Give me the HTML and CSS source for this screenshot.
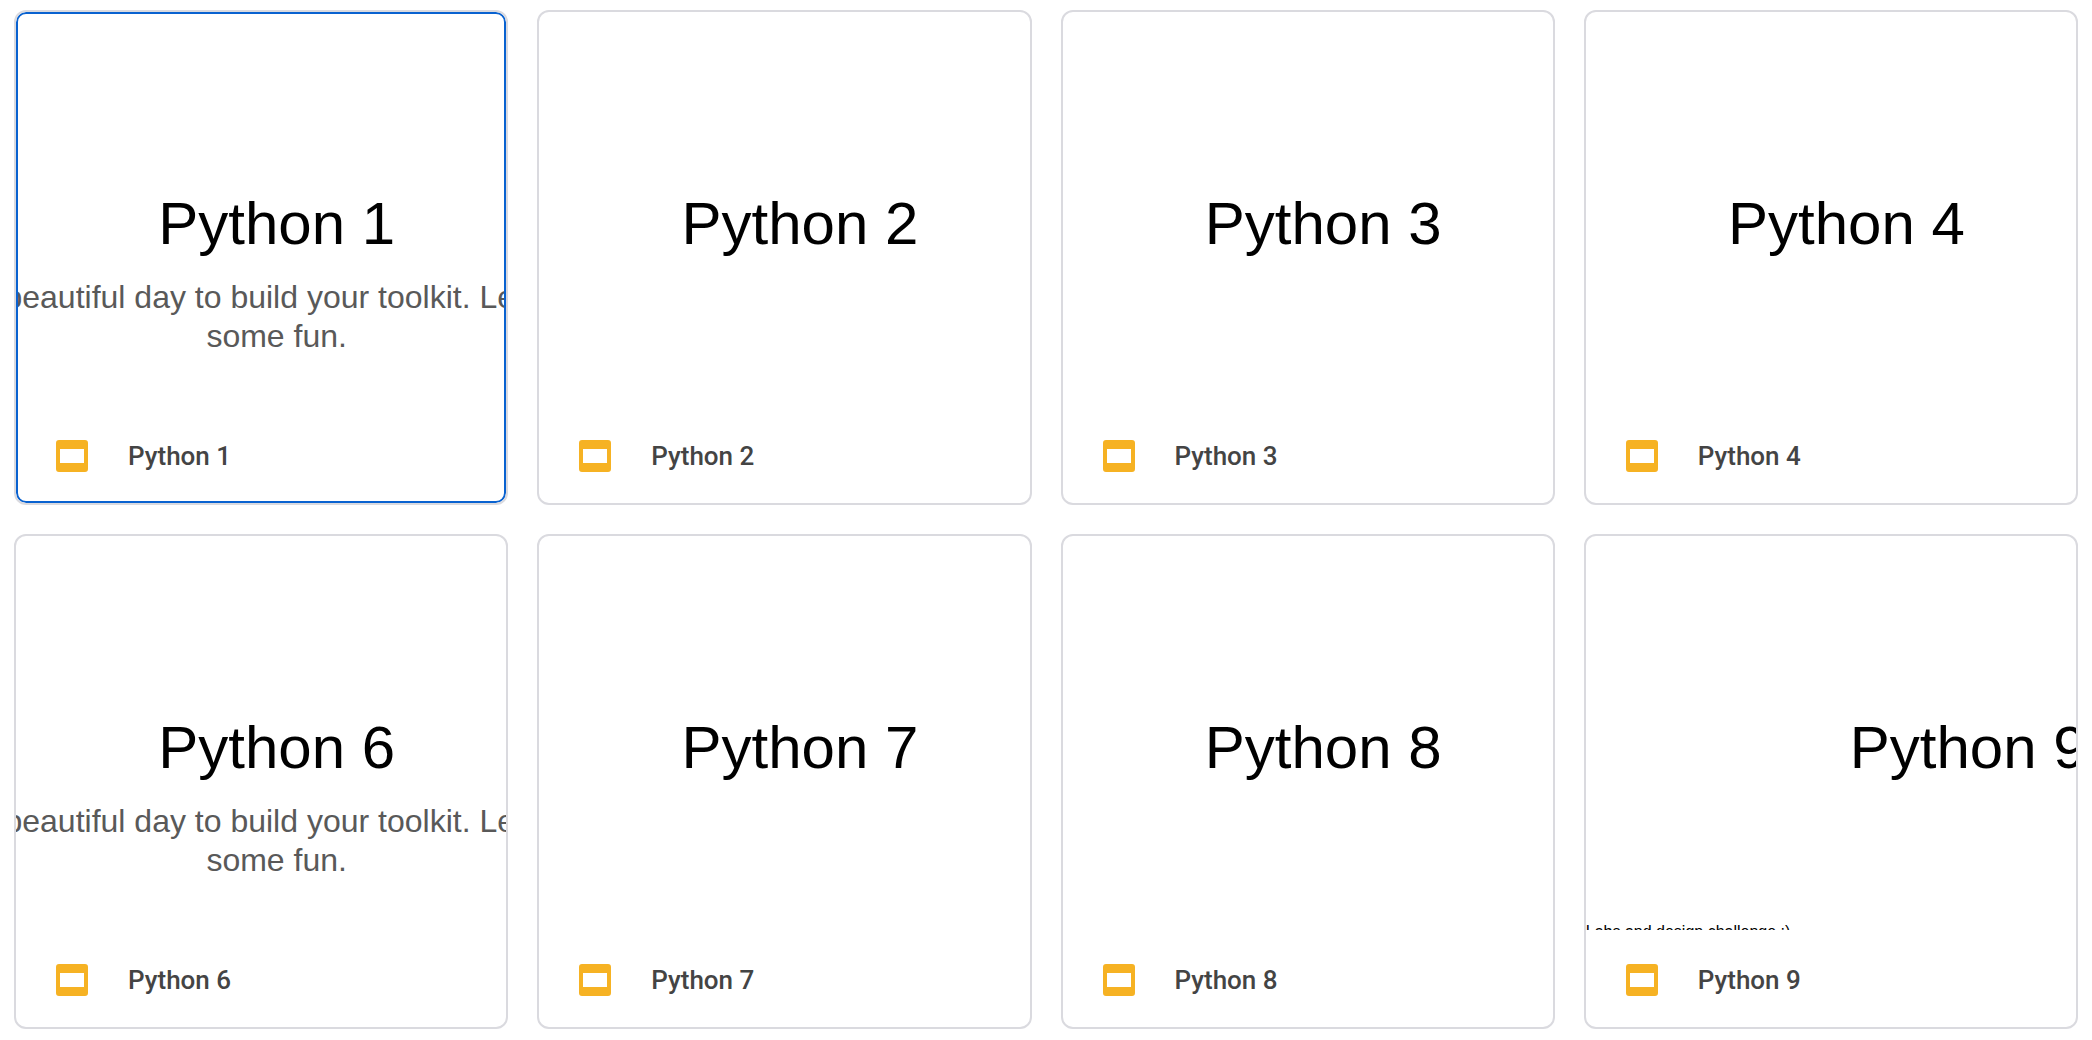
FILE: index.html
```html
<!DOCTYPE html>
<html lang="en">
<head>
<meta charset="utf-8">
<meta name="viewport" content="width=device-width, initial-scale=1">
<title>Python slides</title>
<link rel="stylesheet" href="styles.css">
</head>
<body>
<svg width="0" height="0" class="sprite" aria-hidden="true">
  <symbol id="slides" viewBox="0 0 32 32">
    <path fill="#f6b223" fill-rule="evenodd" d="M3 0h26a3 3 0 0 1 3 3v26a3 3 0 0 1-3 3H3a3 3 0 0 1-3-3V3a3 3 0 0 1 3-3zM4 9v14h24V9z"/>
  </symbol>
</svg>
<main>
  <ul class="grid">
    <li><a class="card selected" href="#python-1" aria-current="true">
      <div class="thumb"><p class="title">Python 1</p><p class="subtitle">It's a beautiful day to build your toolkit. Let's have<br>some fun.</p></div>
      <div class="footer"><svg class="icon" aria-hidden="true"><use href="#slides"/></svg><span>Python 1</span></div>
    </a></li>
    <li><a class="card" href="#python-2">
      <div class="thumb"><p class="title">Python 2</p></div>
      <div class="footer"><svg class="icon" aria-hidden="true"><use href="#slides"/></svg><span>Python 2</span></div>
    </a></li>
    <li><a class="card" href="#python-3">
      <div class="thumb"><p class="title">Python 3</p></div>
      <div class="footer"><svg class="icon" aria-hidden="true"><use href="#slides"/></svg><span>Python 3</span></div>
    </a></li>
    <li><a class="card" href="#python-4">
      <div class="thumb"><p class="title">Python 4</p></div>
      <div class="footer"><svg class="icon" aria-hidden="true"><use href="#slides"/></svg><span>Python 4</span></div>
    </a></li>
    <li><a class="card" href="#python-6">
      <div class="thumb"><p class="title">Python 6</p><p class="subtitle">It's a beautiful day to build your toolkit. Let's have<br>some fun.</p></div>
      <div class="footer"><svg class="icon" aria-hidden="true"><use href="#slides"/></svg><span>Python 6</span></div>
    </a></li>
    <li><a class="card" href="#python-7">
      <div class="thumb"><p class="title">Python 7</p></div>
      <div class="footer"><svg class="icon" aria-hidden="true"><use href="#slides"/></svg><span>Python 7</span></div>
    </a></li>
    <li><a class="card" href="#python-8">
      <div class="thumb"><p class="title">Python 8</p></div>
      <div class="footer"><svg class="icon" aria-hidden="true"><use href="#slides"/></svg><span>Python 8</span></div>
    </a></li>
    <li><a class="card" href="#python-9">
      <div class="thumb thumb-wide"><p class="title">Python 9</p><p class="note">Labs and design challenge :)</p></div>
      <div class="footer"><svg class="icon" aria-hidden="true"><use href="#slides"/></svg><span>Python 9</span></div>
    </a></li>
  </ul>
</main>
</body>
</html>
```
FILE: styles.css
```css
* {
  box-sizing: border-box;
}

body {
  margin: 0;
  background: #fff;
}

p {
  margin: 0;
}

.sprite {
  position: absolute;
}

.grid {
  display: grid;
  grid-template-columns: repeat(4, minmax(0, 1fr));
  gap: 29px;
  margin: 0;
  padding: 10px 14px;
  list-style: none;
}

.card {
  position: relative;
  display: block;
  overflow: hidden;
  border: 2px solid #dadadf;
  border-radius: 12px;
  color: #444;
  text-decoration: none;
}

/* Selection ring, drawn over the thumbnail */
.selected::after {
  content: "";
  position: absolute;
  inset: 0;
  border: 2px solid #0962d0;
  border-radius: 10px;
}

.thumb {
  display: flex;
  flex-direction: column;
  align-items: center;
  height: 394px;
  padding: 174px 0 0 31px;
  overflow: hidden;
  font-family: "Liberation Sans", Arial, sans-serif;
  white-space: nowrap;
}

.title {
  color: #000;
  font-size: 60px;
  line-height: 76px;
}

.subtitle {
  padding-top: 16px;
  color: #595959;
  font-size: 32px;
  line-height: 39px;
  text-align: center;
}

.thumb-wide {
  align-items: stretch;
  padding-left: 0;
}

.thumb-wide .title {
  padding-left: 264px;
}

.note {
  padding-top: 136px;
  color: #000;
  font-size: 16px;
  line-height: 20px;
}

.footer {
  display: flex;
  align-items: center;
  gap: 40px;
  height: 97px;
  padding: 3px 40px 0;
  font: 500 26px/32px Roboto, sans-serif;
}

.icon {
  width: 32px;
  height: 32px;
}
```
